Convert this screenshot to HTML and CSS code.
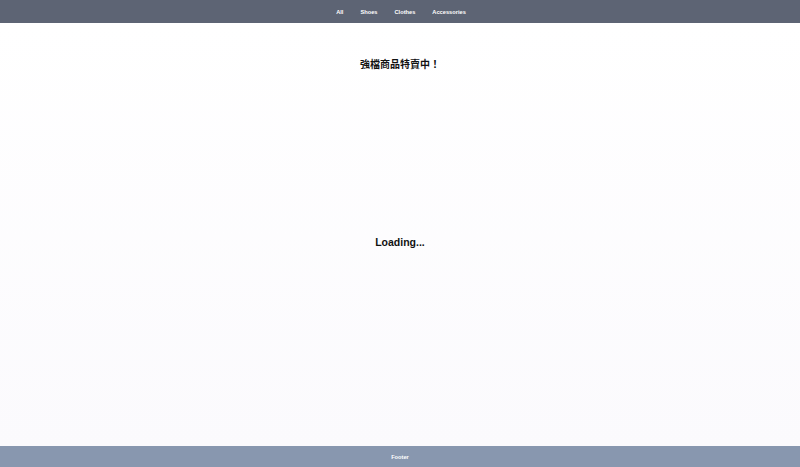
FILE: index.html
```html
<!DOCTYPE html>
<html lang="zh-Hant">
<head>
<meta charset="utf-8">
<title>Shop</title>
<link rel="stylesheet" href="styles.css">
</head>
<body>
<div class="page">
  <header class="topbar">
    <nav class="nav">
      <a class="nav-link" href="#">All</a>
      <a class="nav-link" href="#">Shoes</a>
      <a class="nav-link" href="#">Clothes</a>
      <a class="nav-link" href="#">Accessories</a>
    </nav>
  </header>
  <main class="main">
    <h1 class="title">強檔商品特賣中！</h1>
    <div class="loading">Loading...</div>
  </main>
  <footer class="footer">Footer</footer>
</div>
</body>
</html>
```
FILE: styles.css
```css
html, body {
  margin: 0;
  padding: 0;
  height: 100%;
}
body {
  font-family: "Liberation Sans", Arial, "Noto Sans CJK TC", sans-serif;
  color: #111;
  background: #fcfbfe;
}
.page {
  display: flex;
  flex-direction: column;
  min-height: 100vh;
}
.topbar {
  height: 23px;
  background: #5d6474;
  display: flex;
  align-items: center;
  justify-content: center;
}
.nav {
  display: flex;
  gap: 17px;
  margin-left: 2px;
}
.nav-link {
  color: #ffffff;
  text-decoration: none;
  font-size: 5.7px;
  font-weight: bold;
}
.main {
  flex: 1;
  display: flex;
  flex-direction: column;
  align-items: center;
  background: linear-gradient(#ffffff, #fbfafd);
}
.title {
  margin: 35px 0 0;
  font-family: "Liberation Sans", "Noto Sans CJK TC", sans-serif;
  font-size: 10px;
  line-height: 14px;
  font-weight: bold;
  color: #111;
}
.loading {
  margin-top: 163px;
  font-size: 10.5px;
  line-height: 14px;
  font-weight: bold;
  color: #111;
}
.footer {
  height: 21px;
  background: #8897af;
  color: #ffffff;
  font-size: 5.7px;
  font-weight: bold;
  display: flex;
  align-items: center;
  justify-content: center;
}
```
